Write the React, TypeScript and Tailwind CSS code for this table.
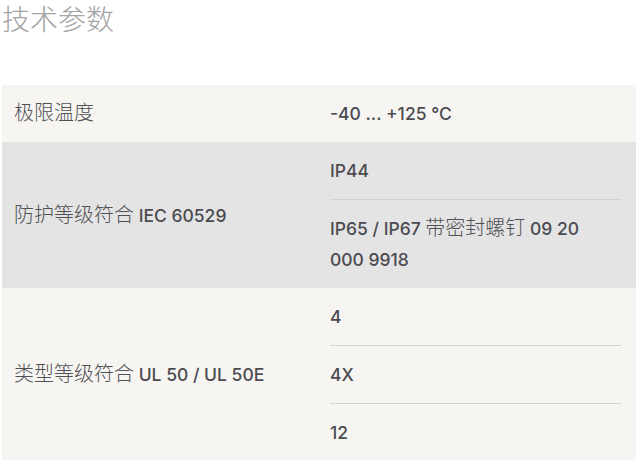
import React from "react";

interface SpecRow {
  label: string;
  values: string[];
  shade: "light" | "dark";
}

const specs: SpecRow[] = [
  { label: "极限温度", values: ["-40 ... +125 °C"], shade: "light" },
  {
    label: "防护等级符合 IEC 60529",
    values: ["IP44", "IP65 / IP67 带密封螺钉 09 20 000 9918"],
    shade: "dark",
  },
  { label: "类型等级符合 UL 50 / UL 50E", values: ["4", "4X", "12"], shade: "light" },
];

const font = { fontFamily: '"Inter", "Noto Sans CJK SC", sans-serif' };

// CJK runs are drawn lighter and a bit bigger than the latin text, like the fallback font in the page
const Mixed = ({ text }: { text: string }) => (
  <>
    {text.split(/([\u4e00-\u9fff]+)/).map((part, i) =>
      /[\u4e00-\u9fff]/.test(part) ? (
        <span key={i} className="text-[20px] font-light text-[#505055]">
          {part}
        </span>
      ) : (
        <span key={i}>{part}</span>
      )
    )}
  </>
);

export default function App() {
  return (
    <div className="min-h-screen bg-white pl-[2px]" style={font}>
      <h2 className="text-[28px] leading-[40px] font-light text-[#a4a4a4]">技术参数</h2>

      <div className="mt-[45px] w-[634px]">
        {specs.map((row) => (
          <div
            key={row.label}
            className={
              "grid grid-cols-[316px_1fr] " +
              (row.shade === "dark" ? "bg-[#e4e4e4]" : "bg-[#f6f5f2]")
            }
          >
            <div className="flex items-center px-3 text-[17.5px] leading-[31px] font-medium text-[#4b4b50]">
              <div>
                <Mixed text={row.label} />
              </div>
            </div>
            <div className="pl-3 pr-[15px]">
              {row.values.map((v, i) => (
                <div
                  key={v}
                  className={
                    "py-[13px] text-[17.5px] leading-[31px] font-medium text-[#4b4b50] " +
                    (i > 0 ? "border-t border-[#d2d2d2]" : "")
                  }
                >
                  <div className="pr-[14px]">
                    <Mixed text={v} />
                  </div>
                </div>
              ))}
            </div>
          </div>
        ))}
      </div>
    </div>
  );
}
